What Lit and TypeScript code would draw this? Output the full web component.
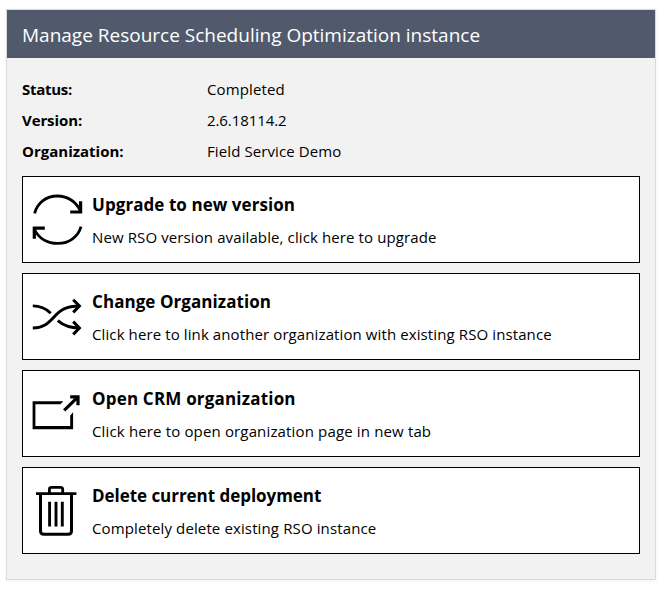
import { LitElement, html, css, svg } from "lit";
import { customElement } from "lit/decorators.js";
import { styleMap } from "lit/directives/style-map.js";

interface Text {
  text: string;
  tracking: number;
}

interface Detail {
  label: Text;
  value: Text;
}

interface Action {
  icon: unknown;
  title: Text;
  description: Text;
}

const t = (text: string, tracking = 0): Text => ({ text, tracking });

const refreshIcon = svg`
  <path d="M2.6 19.4C5.4 8.8 14.4 2 25.3 2C36 2 44.8 8.2 48.6 17.6" stroke-width="2.8"/>
  <path d="M38.2 18H48.6V7.2" stroke-width="3.2"/>
  <path d="M49 32.6C46.2 42.8 37 49.4 26 49.4C15.4 49.4 6.6 44.2 2.4 35.4" stroke-width="2.8"/>
  <path d="M2.3 44.8V34.1H12.8" stroke-width="3.2"/>`;

const shuffleIcon = svg`
  <path d="M.8 14.9C7.6 14.9 13.6 17.2 18.7 22.2" stroke-width="2.9"/>
  <path d="M.8 37C10.2 37 15.4 33.2 21.8 26.2C28.4 18.8 34 15 47.8 15" stroke-width="2.9"/>
  <path d="M25.8 29.6C31.8 34.8 38 37 47.8 37" stroke-width="2.9"/>
  <path d="M41.2 8.8L47.4 15L41.2 21.4M41.2 30.6L47.4 37L41.2 43.4" stroke-width="3"/>`;

const openIcon = svg`
  <path d="M31.4 13.3L28.4 16.2H3.4V38.1H38.2V27.4L41.1 24.2V41.3H.6V13.3Z" fill="#000" stroke="none"/>
  <path d="M32.2 22.4L46 8.9" stroke-width="3.2"/>
  <path d="M38.2 8.8H46V17.2" stroke-width="3.2"/>`;

const trashIcon = svg`
  <path d="M4 8.7H44.4" stroke-width="2.8"/>
  <path d="M17.4 8V4.4Q17.4 2.3 19.5 2.3H28.6Q30.7 2.3 30.7 4.4V8" stroke-width="2.8"/>
  <path d="M8.5 9V46Q8.5 49.2 11.8 49.2H36.2Q39.5 49.2 39.5 46V9" stroke-width="3"/>
  <path d="M17.6 16.7V41.4M24 16.7V41.4M30.3 16.7V41.4" stroke-width="2.9"/>`;

const details: Detail[] = [
  { label: t("Status:", -0.28), value: t("Completed", 0.12) },
  { label: t("Version:", -0.1), value: t("2.6.18114.2", -0.08) },
  { label: t("Organization:"), value: t("Field Service Demo", 0.1) },
];

const actions: Action[] = [
  {
    icon: refreshIcon,
    title: t("Upgrade to new version", 0.06),
    description: t("New RSO version available, click here to upgrade", 0.11),
  },
  {
    icon: shuffleIcon,
    title: t("Change Organization", 0.06),
    description: t("Click here to link another organization with existing RSO instance", 0.105),
  },
  {
    icon: openIcon,
    title: t("Open CRM organization", 0.19),
    description: t("Click here to open organization page in new tab", 0.15),
  },
  {
    icon: trashIcon,
    title: t("Delete current deployment", -0.04),
    description: t("Completely delete existing RSO instance", 0.125),
  },
];

const tracked = (v: Text) =>
  html`<span style=${styleMap({ letterSpacing: `${v.tracking}px` })}>${v.text}</span>`;

@customElement("app-root")
export class AppRoot extends LitElement {
  static styles = css`
    :host {
      display: block;
      box-sizing: border-box;
      height: 590px;
      padding: 9px 8px 10px 6px;
      background: #fff;
      color: #000;
      font-family: "Open Sans", "Noto Sans", sans-serif;
      white-space: nowrap;
    }
    .panel {
      box-sizing: border-box;
      height: 571px;
      border: 1px solid #dadada;
      background: #f2f2f2;
      box-shadow: 0 1px 4px rgba(0, 0, 0, 0.06);
    }
    .heading {
      box-sizing: border-box;
      height: 48px;
      margin: 0;
      padding: 1px 15px 0;
      background: #505a6c;
      color: #fff;
      font-size: 19px;
      font-weight: 400;
      line-height: 48px;
    }
    .details {
      display: grid;
      grid-template-columns: 185px 1fr;
      grid-auto-rows: 31px;
      margin: 0;
      padding: 16px 15px 9px;
      font-size: 15px;
      line-height: 31px;
    }
    .label {
      font-weight: 700;
    }
    .value {
      margin: 0;
    }
    .actions {
      display: flex;
      flex-direction: column;
      gap: 10px;
      padding: 0 15px;
    }
    .card {
      display: flex;
      box-sizing: border-box;
      height: 87px;
      padding: 17px 9px 0;
      border: 1px solid #000;
      background: #fff;
      cursor: pointer;
    }
    .icon {
      flex: none;
      width: 52px;
      height: 52px;
      margin-right: 8px;
      fill: none;
      stroke: #000;
    }
    .title {
      margin: -4px 0 0;
      font-size: 17px;
      font-weight: 700;
      line-height: 29px;
    }
    .description {
      margin: 4px 0 0;
      font-size: 15px;
      line-height: 28px;
    }
  `;

  render() {
    return html`
      <section class="panel">
        <h1 class="heading">Manage Resource Scheduling Optimization instance</h1>
        <dl class="details">
          ${details.map(
            (d) => html`
              <dt class="label">${tracked(d.label)}</dt>
              <dd class="value">${tracked(d.value)}</dd>
            `
          )}
        </dl>
        <div class="actions">
          ${actions.map(
            (a) => html`
              <div class="card" role="button">
                <svg class="icon" viewBox="0 0 52 52" aria-hidden="true">${a.icon}</svg>
                <div>
                  <h2 class="title">${tracked(a.title)}</h2>
                  <p class="description">${tracked(a.description)}</p>
                </div>
              </div>
            `
          )}
        </div>
      </section>
    `;
  }
}
